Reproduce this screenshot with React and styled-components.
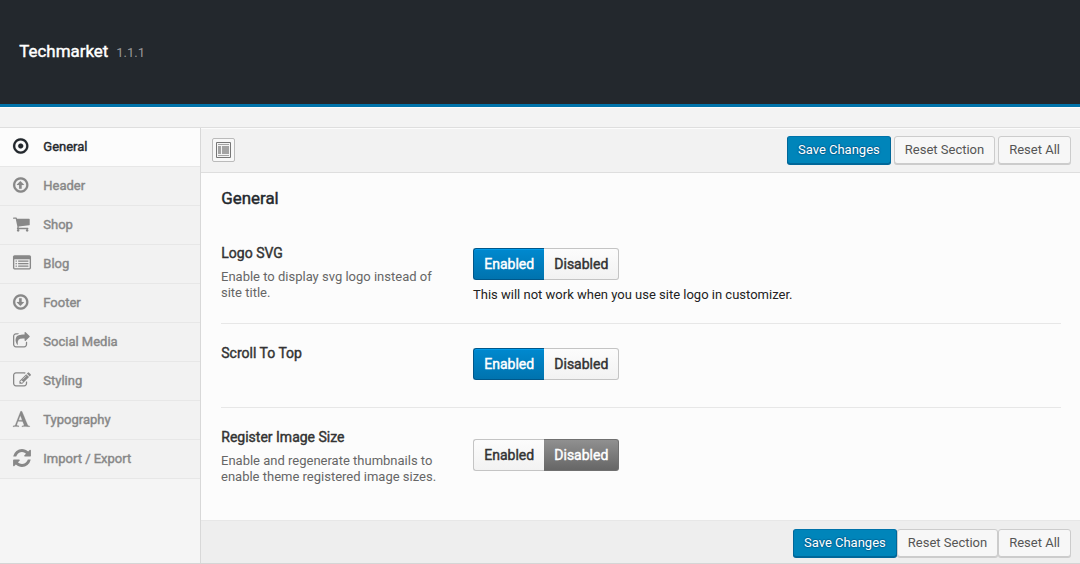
import React from 'react';
import styled, { createGlobalStyle, css } from 'styled-components';

const Global = createGlobalStyle`
  * { box-sizing: border-box; }
  html, body, #root { height: 100%; }
  body {
    margin: 0;
    overflow: hidden;
    background: #f1f1f1;
    color: #333;
    font: 400 13px/16px Roboto, "Liberation Sans", sans-serif;
  }
`;

const strong = css`
  font-weight: 400;
  -webkit-text-stroke: 0.42px currentColor;
`;

const Page = styled.div`
  display: flex;
  flex-direction: column;
  height: 564px;
  width: 100%;
`;

const Banner = styled.header`
  display: flex;
  align-items: baseline;
  height: 107px;
  padding: 41px 19px 0;
  background: #23282d;
  border-bottom: 3px solid #0073aa;
`;

const ThemeName = styled.h2`
  ${strong}
  margin: 0 8px 0 0;
  padding-left: 0.3px;
  font-size: 16.9px;
  line-height: 20px;
  color: #fff;
`;

const Version = styled.span`
  font-size: 13px;
  color: #999;
`;

const Notices = styled.div`
  height: 20px;
  background: #f3f3f3;
  border-top: 1px solid #fcfcfc;
`;

const Body = styled.div`
  display: flex;
  height: 437px;
  border-top: 1px solid #dedede;
  border-bottom: 1px solid #d5d5d5;
  background: #f5f5f5;
`;

const Sidebar = styled.nav`
  width: 201px;
  flex: none;
  border-right: 1px solid #d8d8d8;
`;

const MenuItem = styled.a`
  display: flex;
  align-items: center;
  height: 39px;
  padding-left: 13px;
  border-bottom: 1px solid #e7e7e7;
  background: ${(p) => (p.$active ? '#fcfcfc' : '#f2f2f2')};
  color: ${(p) => (p.$active ? '#23282d' : '#888')};
`;

const MenuIcon = styled.svg`
  display: block;
  flex: none;
  width: 18px;
  height: 18px;
  margin-right: 12.3px;
  margin-bottom: 3px;
  fill: currentColor;
  stroke: currentColor;
  stroke-width: ${(p) => p.$weight || 0};
  overflow: visible;
`;

const MenuLabel = styled.span`
  ${strong}
  font-size: 13px;
`;

const Main = styled.main`
  flex: 1;
  display: flex;
  flex-direction: column;
  background: #fcfcfc;
`;

const Toolbar = styled.div`
  display: flex;
  align-items: flex-start;
  justify-content: space-between;
  height: 45px;
  padding: 8px 9px 0 11px;
  background: #f2f2f2;
  border-bottom: 1px solid #dedede;
  box-shadow: inset 0 1px 0 #fcfcfc;
`;

const BottomBar = styled.div`
  display: flex;
  justify-content: flex-end;
  height: 43px;
  padding: 8px 9px 0;
  background: #eee;
  border-top: 1px solid #e7e7e7;
`;

const Buttons = styled.div`
  display: flex;
  gap: ${(p) => p.$gap || 0};
`;

const Button = styled.button`
  height: 28px;
  padding: 0 10px 1px;
  border: 1px solid #ccc;
  border-radius: 3px;
  background: #f7f7f7;
  box-shadow: 0 1px 0 #ccc;
  color: #555;
  font: 400 13px/26px Roboto, "Liberation Sans", sans-serif;
  white-space: nowrap;
  ${(p) =>
    p.$primary &&
    css`
      background: #0085ba;
      border-color: #0073aa #006799 #006799;
      box-shadow: 0 1px 0 #006799;
      color: #fff;
      text-shadow: 0 -1px 1px #006799, 1px 0 1px #006799, 0 1px 1px #006799, -1px 0 1px #006799;
    `}
`;

const ExpandButton = styled.button`
  display: flex;
  align-items: center;
  justify-content: center;
  width: 23px;
  height: 24px;
  margin-top: 2px;
  padding: 0;
  border: 1px solid #bbb;
  border-radius: 2px;
  background: #f8f8f8;
`;

const Content = styled.section`
  flex: 1;
  padding: 15px 19px 0 20px;
`;

const Title = styled.h2`
  ${strong}
  margin: 0;
  padding-left: 0.3px;
  height: 35px;
  font-size: 16.9px;
  line-height: 21px;
  color: #23282d;
`;

const Field = styled.div`
  display: grid;
  grid-template-columns: 252px 1fr;
  height: ${(p) => p.$height};
  padding-top: ${(p) => p.$top};
  border-bottom: ${(p) => (p.$last ? 'none' : '1px solid #e7e7e7')};
`;

const FieldTitle = styled.div`
  ${strong}
  padding-left: 0.3px;
  font-size: 14px;
  line-height: 16px;
  color: #333;
`;

const Description = styled.p`
  margin: 8px 0 0;
  width: 226px;
  color: #666;
`;

const Control = styled.div`
  padding-top: ${(p) => p.$top};
`;

const Switch = styled.div`
  display: flex;
  width: 146px;
  height: 32px;
`;

const tones = {
  off: css`
    color: #333;
    background: linear-gradient(#fcfcfc, #f2f2f2);
    border-color: #c4c4c4;
  `,
  on: css`
    color: #fff;
    background: linear-gradient(#0089cf, #0073ae);
    border-color: #00578a;
    box-shadow: inset 0 1px 0 #009cec;
  `,
  muted: css`
    color: #fff;
    background: linear-gradient(#909090, #666);
    border-color: #707070;
  `,
};

const Option = styled.span`
  ${strong}
  width: ${(p) => (p.$first ? '71px' : '75px')};
  padding-left: 10.3px;
  border: 1px solid;
  ${(p) => tones[p.$tone]}
  ${(p) =>
    p.$first
      ? css`border-right: 0; border-radius: 3px 0 0 3px;`
      : css`border-left: 0; border-radius: 0 3px 3px 0;`}
  font-size: 14px;
  line-height: 30px;
`;

const Hint = styled.div`
  margin-top: 7px;
  color: #222;
`;

const ring =
  'M896 352q-148 0-273 73t-198 198-73 273 73 273 198 198 273 73 273-73 198-198 73-273-73-273-198-198-273-73zm768 544q0 209-103 385.5t-279.5 279.5-385.5 103-385.5-103-279.5-279.5-103-385.5 103-385.5 279.5-279.5 385.5-103 385.5 103 279.5 279.5 103 385.5z';
const arrow =
  'M1216 928q0 12-10 24l-319 319q-10 9-23 9-12 0-23-9l-320-320q-15-16-7-35 8-20 30-20h192v-352q0-14 9-23t23-9h192q14 0 23 9t9 23v352h192q14 0 23 9t9 23z';
const bullet = 'v64q0 13-9.5 22.5t-22.5 9.5h-64q-13 0-22.5-9.5t-9.5-22.5v-64q0-13 9.5-22.5t22.5-9.5h64q13 0 22.5 9.5t9.5 22.5z';
const line = 'v64q0 13-9.5 22.5t-22.5 9.5h-960q-13 0-22.5-9.5t-9.5-22.5v-64q0-13 9.5-22.5t22.5-9.5h960q13 0 22.5 9.5t9.5 22.5z';

const menu = [
  {
    label: 'General',
    x: 128,
    weight: 15,
    d: 'M1152 896q0 106-75 181t-181 75-181-75-75-181 75-181 181-75 181 75 75 181z' + ring,
  },
  { label: 'Header', x: 128, weight: 12, flip: true, d: arrow + ring },
  {
    label: 'Shop',
    x: 64,
    d: 'M704 1536q0 52-38 90t-90 38-90-38-38-90 38-90 90-38 90 38 38 90zm896 0q0 52-38 90t-90 38-90-38-38-90 38-90 90-38 90 38 38 90zm128-1088v512q0 24-16.5 42.5t-40.5 21.5l-1044 122q13 60 13 70 0 16-24 64h920q26 0 45 19t19 45-19 45-45 19h-1024q-26 0-45-19t-19-45q0-11 8-31.5t16-36 21.5-40 15.5-29.5l-177-823h-204q-26 0-45-19t-19-45 19-45 45-19h256q16 0 28.5 6.5t19.5 15.5 13 24.5 8 26 5.5 29.5 4.5 26h1201q26 0 45 19t19 45z',
  },
  {
    label: 'Blog',
    x: 0,
    weight: 8,
    d: [1184, 928, 672].map((y) => `M384 ${y}${bullet}M1536 ${y}${line}`).join('') +
      'M1664 1376v-832q0-13-9.5-22.5t-22.5-9.5h-1472q-13 0-22.5 9.5t-9.5 22.5v832q0 13 9.5 22.5t22.5 9.5h1472q13 0 22.5-9.5t9.5-22.5zm128-1088v1088q0 66-47 113t-113 47h-1472q-66 0-113-47t-47-113v-1088q0-66 47-113t113-47h1472q66 0 113 47t47 113z',
  },
  { label: 'Footer', x: 128, weight: 12, d: arrow + ring },
  {
    label: 'Social Media',
    x: 64,
    d: 'M1472 989v259q0 119-84.5 203.5t-203.5 84.5h-832q-119 0-203.5-84.5t-84.5-203.5v-832q0-119 84.5-203.5t203.5-84.5h255q13 0 22.5 9.5t9.5 22.5q0 27-26 32-77 26-133 60-10 4-16 4h-112q-66 0-113 47t-47 113v832q0 66 47 113t113 47h832q66 0 113-47t47-113v-214q0-19 18-29 28-13 54-37 16-16 35-8 21 9 21 29zm237-496l-384 384q-18 19-45 19-12 0-25-5-39-17-39-59v-192h-160q-323 0-438 131-119 137-74 473 3 23-20 34-8 2-12 2-16 0-26-13-10-14-21-31t-39.5-68.5-49.5-99.5-38.5-114-17.5-122q0-49 3.5-91t14-90 28-88 47-81.5 68.5-74 94.5-61.5 124.5-48.5 159.5-30.5 196.5-11h160v-192q0-42 39-59 13-5 25-5 26 0 45 19l384 384q19 19 19 45t-19 45z',
  },
  {
    label: 'Styling',
    x: 0,
    d: 'M888 1184l116-116-152-152-116 116v56h96v96h56zm440-720q-16-16-33 1l-350 350q-17 17-1 33t33-1l350-350q17-17 1-33zm80 594v190q0 119-84.5 203.5t-203.5 84.5h-832q-119 0-203.5-84.5t-84.5-203.5v-832q0-119 84.5-203.5t203.5-84.5h832q63 0 117 25 15 7 18 23 3 17-9 29l-49 49q-14 14-32 8-23-6-45-6h-832q-66 0-113 47t-47 113v832q0 66 47 113t113 47h832q66 0 113-47t47-113v-126q0-13 9-22l64-64q15-15 35-7t20 29zm-96-738l288 288-672 672h-288v-288zm444 132l-92 92-288-288 92-92q28-28 68-28t68 28l152 152q28 28 28 68t-28 68z',
  },
  {
    label: 'Typography',
    x: 64,
    weight: 25,
    d: 'M789 559l-170 450q33 0 136.5 2t160.5 2q19 0 57-2-87-253-184-452zm-725 1105l2-79q23-7 56-12.5t57-10.5 49.5-14.5 44.5-29 31-50.5l237-616 280-724h128q8 14 11 21l205 480q33 78 106 257.5t114 274.5q15 34 58 144.5t72 168.5q20 45 35 57 19 15 88 29.5t84 20.5q6 38 6 57 0 5-.5 13.5t-.5 12.5q-63 0-190-8t-191-8q-76 0-215 7t-178 8q0-43 4-78l131-28q1 0 12.5-2.5t15.5-3.5 14.5-4.5 15-6.5 11-8 9-11 2.5-14q0-16-31-96.5t-72-177.5-42-100l-450-2q-26 58-76.5 195.5t-50.5 162.5q0 22 14 37.5t43.5 24.5 48.5 13.5 57 8.5 41 4q1 19 1 58 0 9-2 27-58 0-174.5-10t-174.5-10q-8 0-26.5 4t-21.5 4q-80 14-188 14z',
  },
  {
    label: 'Import / Export',
    x: 0,
    box: '120 120 1552 1552',
    d: 'M1639 1056q0 5-1 7-64 268-268 434.5t-478 166.5q-146 0-282.5-55t-243.5-157l-129 129q-19 19-45 19t-45-19-19-45v-448q0-26 19-45t45-19h448q26 0 45 19t19 45-19 45l-137 137q71 66 161 102t187 36q134 0 250-65t186-179q11-17 53-117 8-23 30-23h192q13 0 22.5 9.5t9.5 22.5zm25-800v448q0 26-19 45t-45 19h-448q-26 0-45-19t-19-45 19-45l138-138q-148-137-349-137-134 0-250 65t-186 179q-11 17-53 117-8 23-30 23h-199q-13 0-22.5-9.5t-9.5-22.5v-7q65-268 270-434.5t480-166.5q146 0 284 55.5t245 156.5l130-129q19-19 45-19t45 19 19 45z',
  },
];

const Toggle = ({ on }) => (
  <Switch>
    <Option $first $tone={on ? 'on' : 'off'}>Enabled</Option>
    <Option $tone={on ? 'off' : 'muted'}>Disabled</Option>
  </Switch>
);

const Actions = ({ gap }) => (
  <Buttons $gap={gap}>
    <Button $primary>Save Changes</Button>
    <Button>Reset Section</Button>
    <Button>Reset All</Button>
  </Buttons>
);

export default function App() {
  return (
    <Page>
      <Global />
      <Banner>
        <ThemeName>Techmarket</ThemeName>
        <Version>1.1.1</Version>
      </Banner>
      <Notices />
      <Body>
        <Sidebar>
          {menu.map((m, i) => (
            <MenuItem key={m.label} $active={i === 0}>
              <MenuIcon viewBox={m.box || `${m.x} 0 1792 1792`} $weight={m.weight}>
                <path fillRule="evenodd" d={m.d} transform={m.flip ? 'matrix(1 0 0 -1 0 1792)' : undefined} />
              </MenuIcon>
              <MenuLabel>{m.label}</MenuLabel>
            </MenuItem>
          ))}
        </Sidebar>
        <Main>
          <Toolbar>
            <ExpandButton aria-label="Expand">
              <svg width="15" height="16" viewBox="0 0 15 16">
                <path d="M.5.5h14v15H.5z" fill="#f4f4f4" stroke="#777" />
                <path d="M2 2h11v1H2zM2 4h3v8H2zM6 4h7v8H6zM2 13h11v1H2z" fill="#a4a4a4" />
              </svg>
            </ExpandButton>
            <Actions gap="3px" />
          </Toolbar>
          <Content>
            <Title>General</Title>
            <Field $height="101px" $top="22px">
              <div>
                <FieldTitle>Logo SVG</FieldTitle>
                <Description>Enable to display svg logo instead of site title.</Description>
              </div>
              <Control $top="3px">
                <Toggle on />
                <Hint>This will not work when you use site logo in customizer.</Hint>
              </Control>
            </Field>
            <Field $height="84px" $top="21px">
              <FieldTitle>Scroll To Top</FieldTitle>
              <Control $top="3px">
                <Toggle on />
              </Control>
            </Field>
            <Field $height="100px" $top="21px" $last>
              <div>
                <FieldTitle>Register Image Size</FieldTitle>
                <Description>Enable and regenerate thumbnails to enable theme registered image sizes.</Description>
              </div>
              <Control $top="10px">
                <Toggle />
              </Control>
            </Field>
          </Content>
          <BottomBar>
            <Actions />
          </BottomBar>
        </Main>
      </Body>
    </Page>
  );
}
